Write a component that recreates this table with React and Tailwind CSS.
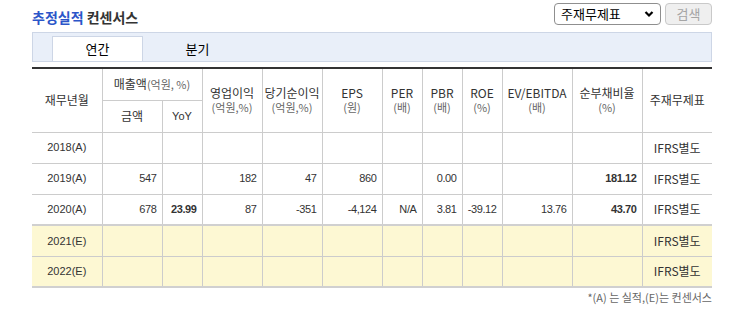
import React from "react";

const KR = { fontFamily: '"Noto Sans CJK KR", "Liberation Sans", sans-serif' };
const NUM = { fontFamily: '"Liberation Sans", "Noto Sans CJK KR", sans-serif' };

const rows = [
  { y: "2018(A)", v: ["", "", "", "", "", "", "", "", "", ""], e: false },
  { y: "2019(A)", v: ["547", "", "182", "47", "860", "", "0.00", "", "", "181.12"], e: false },
  { y: "2020(A)", v: ["678", "23.99", "87", "-351", "-4,124", "N/A", "3.81", "-39.12", "13.76", "43.70"], e: false, thick: true },
  { y: "2021(E)", v: ["", "", "", "", "", "", "", "", "", ""], e: true },
  { y: "2022(E)", v: ["", "", "", "", "", "", "", "", "", ""], e: true, thick: true },
];
const boldIdx = [1, 9];

function TwoLine({ a, b }) {
  return (
    <div className="flex flex-col items-center leading-[14px]">
      <span className="text-[12px] text-[#333]">{a}</span>
      <span className="text-[11px] text-[#666]">{b}</span>
    </div>
  );
}

export default function App() {
  const th = "border-r border-b border-[#cccccc] font-normal p-0 text-center align-middle";
  return (
    <div className="w-[730px] h-[312px] bg-white pl-[32px] pt-[3px]" style={KR}>
      <div className="w-[680px]">
        <div className="flex justify-between items-start">
          <div className="pt-[3px] leading-[22px] text-[14px] font-bold">
            <span className="text-[#2b55c9]">추정실적</span>{" "}
            <span className="text-[#333]">컨센서스</span>
          </div>
          <div className="flex gap-[4px]">
            <div className="w-[107px] h-[22px] border border-[#8f8f8f] rounded-[4px] flex items-center justify-between pl-[6px] pr-[6px] text-[13px] text-black bg-white">
              <span>주재무제표</span>
              <svg width="10" height="8" viewBox="0 0 10 8">
                <path d="M1.5 2 L5 5.5 L8.5 2" stroke="#000" strokeWidth="2.2" fill="none" />
              </svg>
            </div>
            <div className="w-[47px] h-[22px] border border-[#c9c9c9] rounded-[4px] bg-[#efefef] flex items-center justify-center text-[13px] text-[#a5a5a5]">
              검색
            </div>
          </div>
        </div>
        <div className="mt-[4px] h-[30px] border border-[#cdd6e6] bg-[#e9eff9] flex items-end pl-[19px]">
          <div className="w-[91px] h-[25px] bg-white border-t border-l border-r border-[#cdd6e6] flex items-center justify-center text-[13px] text-black">
            연간
          </div>
          <div className="w-[91px] ml-[9px] h-[25px] flex items-center justify-center text-[13px] text-black">
            분기
          </div>
        </div>
        <table className="mt-[5px] w-[680px] table-fixed border-collapse border-t-2 border-t-[#333]">
          <colgroup>
            <col className="w-[70px]" />
            <col className="w-[60px]" />
            <col className="w-[40px]" />
            <col className="w-[60px]" />
            <col className="w-[60px]" />
            <col className="w-[60px]" />
            <col className="w-[40px]" />
            <col className="w-[40px]" />
            <col className="w-[40px]" />
            <col className="w-[70px]" />
            <col className="w-[70px]" />
            <col className="w-[70px]" />
          </colgroup>
          <thead>
            <tr className="h-[32px]">
              <th rowSpan={2} className={th + " text-[12px] text-[#333]"}>재무년월</th>
              <th colSpan={2} className={th + " text-[12px] text-[#333]"}>
                매출액<span className="text-[11px] text-[#666]">(억원, %)</span>
              </th>
              <th rowSpan={2} className={th}><TwoLine a="영업이익" b="(억원,%)" /></th>
              <th rowSpan={2} className={th}><TwoLine a="당기순이익" b="(억원,%)" /></th>
              <th rowSpan={2} className={th}><TwoLine a="EPS" b="(원)" /></th>
              <th rowSpan={2} className={th}><TwoLine a="PER" b="(배)" /></th>
              <th rowSpan={2} className={th}><TwoLine a="PBR" b="(배)" /></th>
              <th rowSpan={2} className={th}><TwoLine a="ROE" b="(%)" /></th>
              <th rowSpan={2} className={th}><TwoLine a="EV/EBITDA" b="(배)" /></th>
              <th rowSpan={2} className={th}><TwoLine a="순부채비율" b="(%)" /></th>
              <th rowSpan={2} className="border-b border-[#cccccc] font-normal p-0 text-center text-[12px] text-[#333]">주재무제표</th>
            </tr>
            <tr className="h-[32px]">
              <th className={th + " text-[12px] text-[#333]"}>금액</th>
              <th className={th + " text-[11px] text-[#333]"} style={NUM}>YoY</th>
            </tr>
          </thead>
          <tbody>
            {rows.map((r, i) => {
              const bb = r.thick ? "border-b-2 border-b-[#d0d0d0]" : "border-b border-b-[#cccccc]";
              const bg = r.e ? "bg-[#fdf8d3]" : "bg-white";
              return (
                <tr key={i} className={"h-[31px] " + bg}>
                  <td className={"p-0 text-center text-[11px] text-[#333] border-r border-r-[#cccccc] " + bb} style={NUM}>
                    {r.y}
                  </td>
                  {r.v.map((v, j) => (
                    <td
                      key={j}
                      className={
                        "p-0 pr-[5px] text-right text-[11px] tracking-[-0.4px] text-[#333] border-r border-r-[#cccccc] " +
                        bb +
                        (boldIdx.includes(j) ? " font-bold" : "")
                      }
                      style={NUM}
                    >
                      {v}
                    </td>
                  ))}
                  <td className={"p-0 text-center text-[12px] text-[#333] " + bb}>IFRS별도</td>
                </tr>
              );
            })}
          </tbody>
        </table>
        <div className="mt-[1px] text-right text-[11px] leading-[16px] text-[#666]">
          *(A) 는 실적,(E)는 컨센서스
        </div>
      </div>
    </div>
  );
}
